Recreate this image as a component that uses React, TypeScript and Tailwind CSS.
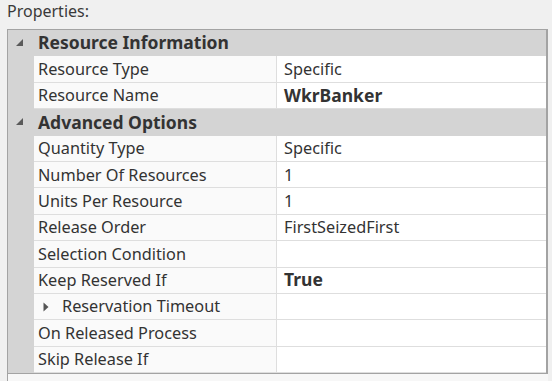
import React from "react";

type Row =
  | { kind: "header"; label: string }
  | { kind: "prop"; label: string; value?: string; bold?: boolean; child?: boolean };

const rows: Row[] = [
  { kind: "header", label: "Resource Information" },
  { kind: "prop", label: "Resource Type", value: "Specific" },
  { kind: "prop", label: "Resource Name", value: "WkrBanker", bold: true },
  { kind: "header", label: "Advanced Options" },
  { kind: "prop", label: "Quantity Type", value: "Specific" },
  { kind: "prop", label: "Number Of Resources", value: "1" },
  { kind: "prop", label: "Units Per Resource", value: "1" },
  { kind: "prop", label: "Release Order", value: "FirstSeizedFirst" },
  { kind: "prop", label: "Selection Condition" },
  { kind: "prop", label: "Keep Reserved If", value: "True", bold: true },
  { kind: "prop", label: "Reservation Timeout", child: true },
  { kind: "prop", label: "On Released Process" },
  { kind: "prop", label: "Skip Release If" },
];

function CollapseGlyph() {
  return (
    <svg width="8" height="8" viewBox="0 0 8 8" className="block">
      <polygon points="7,0 7,7 0,7" fill="#5a5a5a" />
    </svg>
  );
}

function ExpandGlyph() {
  return (
    <svg width="6" height="10" viewBox="0 0 6 10" className="block">
      <polygon points="0.5,0.5 5.5,5 0.5,9.5" fill="#555555" />
    </svg>
  );
}

export default function App() {
  return (
    <div className="w-[552px] h-[381px] overflow-hidden bg-[#f0f0f0] font-['Noto_Sans','Open_Sans',sans-serif] text-[#333333]">
      <div className="h-[20px] pl-[7px]">
        <div className="text-[16px] leading-[20px] pt-[1px] text-[#3a3a3a]">Properties:</div>
      </div>
      <div className="h-[9px]" />
      <div className="ml-[7px] w-[541px] border-l border-t border-r-2 border-b border-[#a3a3a3] bg-[#d4d4d4]">
        {rows.map((r, i) =>
          r.kind === "header" ? (
            <div key={i} className="flex h-[26.4px] items-center bg-[#d4d4d4]">
              <div className="w-[26px] h-full flex items-center justify-end pr-[10px]">
                <CollapseGlyph />
              </div>
              <div className="pl-[4px] text-[17.5px] font-bold leading-none text-[#333333]">{r.label}</div>
            </div>
          ) : (
            <div key={i} className="flex h-[26.4px]">
              <div className="w-[26px] h-full bg-[#d4d4d4]" />
              <div className="w-[242px] h-full border-b border-[#dedede] bg-[#fafafa] flex items-center pl-[4px] text-[16.3px] leading-none">
                {r.child ? (
                  <div className="flex items-center">
                    <div className="ml-[5px] mr-[13px]">
                      <ExpandGlyph />
                    </div>
                    <span>{r.label}</span>
                  </div>
                ) : (
                  <span>{r.label}</span>
                )}
              </div>
              <div className="w-[1px] h-full bg-[#dedede]" />
              <div
                className={
                  "flex-1 h-full border-b border-[#dedede] bg-white flex items-center pl-[7px] leading-none " +
                  (r.bold ? "text-[17.5px] font-bold" : "text-[16.3px]")
                }
              >
                {r.value ?? ""}
              </div>
            </div>
          )
        )}
      </div>
      <div className="ml-[7px] w-[541px] h-[20px] border-l border-[#a3a3a3] bg-[#f7f7f7]" />
    </div>
  );
}
